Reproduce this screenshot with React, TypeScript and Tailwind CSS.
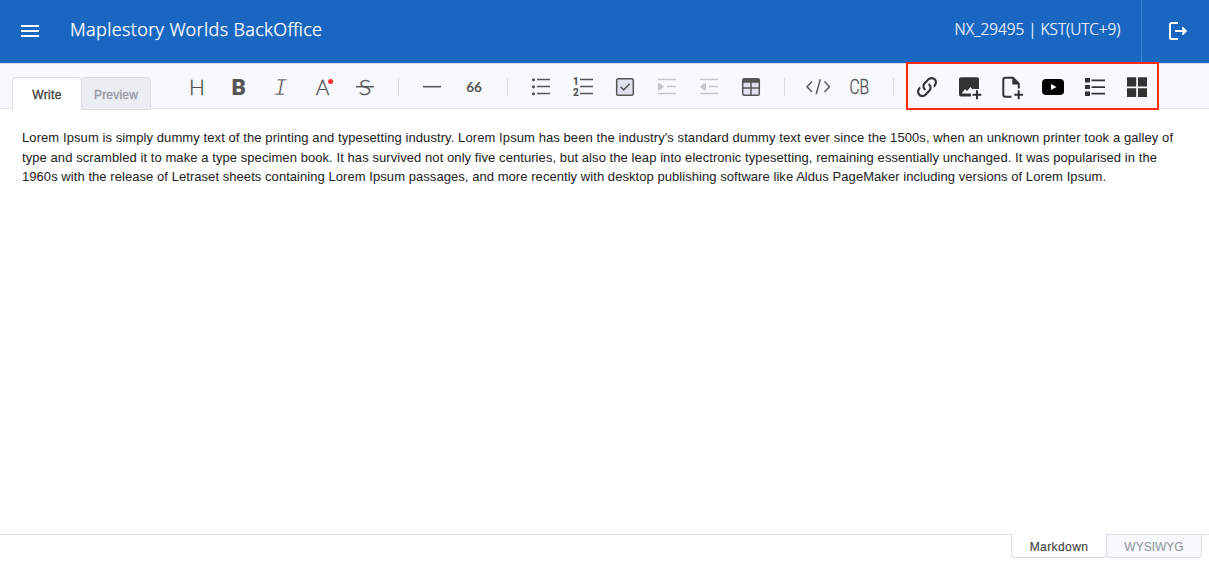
import React from "react";

type IconProps = { children: React.ReactNode; label: string };

function Tool({ children, label }: IconProps) {
  return (
    <button aria-label={label} className="block h-11 w-[42px] shrink-0">
      <svg viewBox="0 0 42 44" className="block h-11 w-[42px]" fill="none" stroke="#555" strokeWidth="1.5">
        {children}
      </svg>
    </button>
  );
}

function Divider() {
  return <div className="mx-3 mt-3.5 h-[18px] w-px shrink-0 bg-[#dbdee8]" />;
}

function GlyphTool({ label, text, x, y, width, className }: { label: string; text: string; x: number; y: number; width: number; className: string }) {
  return (
    <Tool label={label}>
      <text x={x} y={y} textLength={width} lengthAdjust="spacingAndGlyphs" fill="#555" className={className}>
        {text}
      </text>
    </Tool>
  );
}

function Header() {
  return (
    <header className="flex h-[63px] shrink-0 bg-[#1967c1] font-['Noto_Sans',sans-serif] text-white">
      <button aria-label="Menu" className="ml-[21px] mt-[25px] flex h-3 w-[18px] flex-col justify-between">
        <span className="h-0.5 w-full bg-white" />
        <span className="h-0.5 w-full bg-white" />
        <span className="h-0.5 w-full bg-white" />
      </button>
      <svg className="ml-[31px] h-[63px] w-[254px]" fill="white">
        <text x="0" y="36" textLength="252" stroke="white" strokeWidth="0.25" className="text-[18px] font-light">
          Maplestory Worlds BackOffice
        </text>
      </svg>
      <svg className="ml-auto mr-5 h-[63px] w-[167px]" fill="#f0f5fc">
        <text x="0.5" y="34.5" textLength="166" lengthAdjust="spacingAndGlyphs" stroke="#f0f5fc" strokeWidth="0.2" className="text-[15.5px] font-light">
          NX_29495 | KST(UTC+9)
        </text>
      </svg>
      <button aria-label="Log out" className="h-full w-[68px] border-l border-[#3f80cc]">
        <svg viewBox="0 0 67 63" className="h-full w-full" fill="none" stroke="white" strokeWidth="2">
          <path d="M36 23H29.5Q28 23 28 24.5V37.5Q28 39 29.5 39H36M33 31H43" />
          <path d="M40.5 26.8 45 31 40.5 35.2Z" fill="white" stroke="none" />
          <path d="M40.5 27.5 44 31 40.5 34.5" strokeWidth="1.5" />
        </svg>
      </button>
    </header>
  );
}

function Toolbar() {
  return (
    <div className="flex h-[46px] shrink-0 border-b border-t border-b-[#e6e8f0] border-t-[#d5dbe8] bg-[#f7f9fc] font-['Liberation_Sans',sans-serif]">
      <div className="ml-3 mt-[13px] flex h-[33px] w-[139px] shrink-0 text-[12px]">
        <button className="h-[33px] w-[70px] rounded-t border border-b-0 border-[#dadde6] bg-white pt-0.5 text-[#444]">
          <span className="tracking-[0.35px] [-webkit-text-stroke:0.35px]">Write</span>
        </button>
        <button className="-ml-px h-[33px] w-[70px] rounded-t border border-[#dadde6] bg-[#eaedf1] pt-0.5 text-[#969aa5]">
          <span className="tracking-[0.2px] [-webkit-text-stroke:0.35px]">Preview</span>
        </button>
      </div>
      <div className="ml-[25px] flex">
        <GlyphTool label="Heading" text="H" x={13.1} y={31} width={15.8} className="stroke-[#555] stroke-[0.4px] font-[Lato] text-[22px] font-light" />
        <GlyphTool label="Bold" text="B" x={13.4} y={31} width={14.4} className="stroke-none font-[Roboto] text-[22px] font-black" />
        <GlyphTool label="Italic" text="I" x={13.5} y={31} width={14} className="stroke-[#f7f9fc] stroke-[0.6px] font-['Liberation_Mono'] text-[24px] italic" />
        <Tool label="Text color">
          <text x="13.7" y="31" textLength="13.6" lengthAdjust="spacingAndGlyphs" fill="#555" strokeWidth="0.4" className="font-[Lato] text-[22px] font-light">A</text>
          <circle cx="28.6" cy="17.6" r="2.5" fill="#ff2b2b" stroke="none" />
        </Tool>
        <Tool label="Strike">
          <text x="14.7" y="31" textLength="12.6" lengthAdjust="spacingAndGlyphs" fill="#555" strokeWidth="0.4" className="font-[Lato] text-[22px] font-light">S</text>
          <path d="M12 22.7H30" />
        </Tool>
        <Divider />
        <Tool label="Line"><path d="M12 22.7H30" /></Tool>
        <GlyphTool label="Blockquote" text="66" x={13.2} y={28.3} width={15.8} className="stroke-none font-[Lato] text-[14px] font-bold" />
        <Divider />
        <Tool label="Unordered list">
          <path d="M17 15.6H30M17 22.6H30M17 29.6H30" />
          <g fill="#555" stroke="none">
            <circle cx="13.5" cy="15.8" r="1.6" />
            <circle cx="13.5" cy="22.8" r="1.6" />
            <circle cx="13.5" cy="29.8" r="1.6" />
          </g>
        </Tool>
        <Tool label="Ordered list">
          <path d="M18 15.6H31M18 22.6H31M18 29.6H31" />
          <g fill="#555" strokeWidth="0.2" className="font-[Roboto] text-[10px] font-bold">
            <text x="11" y="20.8">1</text>
            <text x="11" y="32.2">2</text>
          </g>
        </Tool>
        <Tool label="Task">
          <rect x="12.7" y="14.7" width="16.6" height="16.6" rx="1.5" fill="#dfe2ef" />
          <path d="m16.5 22.8 3.2 3.1 6-6" />
        </Tool>
        <Tool label="Indent">
          <path d="M12 15.6H30M21 22.6H30M12 29.6H30" stroke="#c5c6c9" />
          <path d="M12 19.2h2l4 3.6-4 3.5h-2Z" fill="#c5c6c9" stroke="none" />
        </Tool>
        <Tool label="Outdent">
          <path d="M12 15.6H30M21 22.6H30M12 29.6H30" stroke="#c5c6c9" />
          <path d="M18 19.2h-2l-4 3.6 4 3.5h2Z" fill="#c5c6c9" stroke="none" />
        </Tool>
        <Tool label="Insert table">
          <rect x="12.7" y="14.7" width="16.6" height="16.6" rx="1.5" fill="#dfe2ef" />
          <path d="M12.7 15h16.6v3H12.7Z" fill="#555" stroke="none" />
          <path d="M12.7 18H29.3M12.7 24H29.3M21 18V31" />
        </Tool>
        <Divider />
        <Tool label="Inline code">
          <path d="m15 17.5-5 5.3 5 5.3M27.5 17.5l5 5.3-5 5.3M23.4 15.3l-4.3 15" strokeWidth="1.4" />
        </Tool>
        <GlyphTool label="Code block" text="CB" x={10.4} y={30} width={19.8} className="stroke-[#555] stroke-[0.3px] font-[Roboto] text-[19.5px] font-light" />
        <Divider />
        <div className="relative flex">
          <Tool label="Insert link">
            <g transform="translate(8 10) scale(1.083)" fill="#333" stroke="none">
              <path d="M10.59 13.41C11 13.8 11 14.44 10.59 14.83C10.2 15.22 9.56 15.22 9.17 14.83C7.22 12.88 7.22 9.71 9.17 7.76L12.71 4.22C14.66 2.27 17.83 2.27 19.78 4.22C21.73 6.17 21.73 9.34 19.78 11.29L18.29 12.78C18.3 11.96 18.17 11.14 17.89 10.36L18.36 9.88C19.54 8.71 19.54 6.81 18.36 5.64C17.19 4.46 15.29 4.46 14.12 5.64L10.59 9.17C9.41 10.34 9.41 12.24 10.59 13.41Z" />
              <path d="M13.41 9.17C13.8 8.78 14.44 8.78 14.83 9.17C16.78 11.12 16.78 14.29 14.83 16.24L11.29 19.78C9.34 21.73 6.17 21.73 4.22 19.78C2.27 17.83 2.27 14.66 4.22 12.71L5.71 11.22C5.7 12.04 5.83 12.86 6.11 13.65L5.64 14.12C4.46 15.29 4.46 17.19 5.64 18.36C6.81 19.54 8.71 19.54 9.88 18.36L13.41 14.83C14.59 13.66 14.59 11.76 13.41 10.59C13 10.2 13 9.56 13.41 9.17Z" />
            </g>
          </Tool>
          <Tool label="Insert image">
            <path d="M13 13.3H29Q31 13.3 31 15.3V25H25V32.5H13Q11 32.5 11 30.5V15.3Q11 13.3 13 13.3Z" fill="#333" stroke="none" />
            <path d="m13.5 29.5 3.5-4.3 2.2 1.8 3.3-4 2 2.6 2-1v4.9Z" fill="#f7f9fc" stroke="none" />
            <path d="M23 30.7H33M29 25V35" stroke="#f7f9fc" strokeWidth="4.5" />
            <path d="M24.5 30.7H33.3M29 26.3V35.2" stroke="#333" strokeWidth="2" />
          </Tool>
          <Tool label="Insert file">
            <path d="M21.5 32.7H15.3Q13.3 32.7 13.3 30.7V15.7Q13.3 13.7 15.3 13.7H23L28.8 19.7V24.5" stroke="#333" strokeWidth="2" />
            <path d="M22.3 13V20.5H29.8Z" fill="#333" stroke="none" />
            <path d="M24.3 30.7H33.1M28.7 26.3V35.2" stroke="#333" strokeWidth="2" />
          </Tool>
          <Tool label="Insert video">
            <rect x="10" y="15" width="22" height="16" rx="4" fill="#000" stroke="none" />
            <path d="M19 20v6l5.5-3Z" fill="white" stroke="none" />
          </Tool>
          <Tool label="Contents">
            <path d="M11 14h5v4.5h-5ZM11 21h5v4h-5ZM11 27.5h5v4.5h-5ZM17.5 15.5H31v1.7H17.5ZM17.5 22.2H31v1.7H17.5ZM17.5 28.8H31v1.7H17.5Z" fill="#333" stroke="none" />
          </Tool>
          <Tool label="Grid">
            <path d="M11 13.3h9.2v9.2H11ZM22 13.3h9v9.2h-9ZM11 24.2h9.2V33H11ZM22 24.2h9V33h-9Z" fill="#333" stroke="none" />
          </Tool>
          <div className="pointer-events-none absolute -top-0.5 left-0 h-12 w-[253px] border-2 border-[#ff2b0a]" />
        </div>
      </div>
    </div>
  );
}

const lines = [
  { text: "Lorem Ipsum is simply dummy text of the printing and typesetting industry. Lorem Ipsum has been the industry's standard dummy text ever since the 1500s, when an unknown printer took a galley of", width: 1151 },
  { text: "type and scrambled it to make a type specimen book. It has survived not only five centuries, but also the leap into electronic typesetting, remaining essentially unchanged. It was popularised in the", width: 1135 },
  { text: "1960s with the release of Letraset sheets containing Lorem Ipsum passages, and more recently with desktop publishing software like Aldus PageMaker including versions of Lorem Ipsum.", width: 1084 },
];

export default function App() {
  return (
    <div className="flex h-[561px] w-[1209px] flex-col overflow-hidden bg-white font-['Liberation_Sans',sans-serif]">
      <Header />
      <Toolbar />
      <main className="min-h-0 flex-1 pl-[22px] pt-[19px]">
        {lines.map((line) => (
          <svg key={line.text} className="block h-[19.5px] w-[1170px]" fill="#222">
            <text x="0" y="14" textLength={line.width} className="text-[13px]">{line.text}</text>
          </svg>
        ))}
      </main>
      <footer className="flex h-[27px] shrink-0 justify-end pr-[7px] text-[12px]">
        <div className="flex-1 border-t border-[#dadde6]" />
        <button className="h-6 w-24 rounded-b border border-t-0 border-[#dadde6] bg-white pt-0.5 text-[#444]">
          <span className="tracking-[0.4px] [-webkit-text-stroke:0.15px]">Markdown</span>
        </button>
        <button className="-ml-px h-6 w-24 rounded-b border border-[#dadde6] bg-[#f7f9fc] pt-px text-[#969aa5]">
          <span className="[-webkit-text-stroke:0.15px]">WYSIWYG</span>
        </button>
        <div className="-mr-[7px] w-[7px] border-t border-[#dadde6]" />
      </footer>
    </div>
  );
}
